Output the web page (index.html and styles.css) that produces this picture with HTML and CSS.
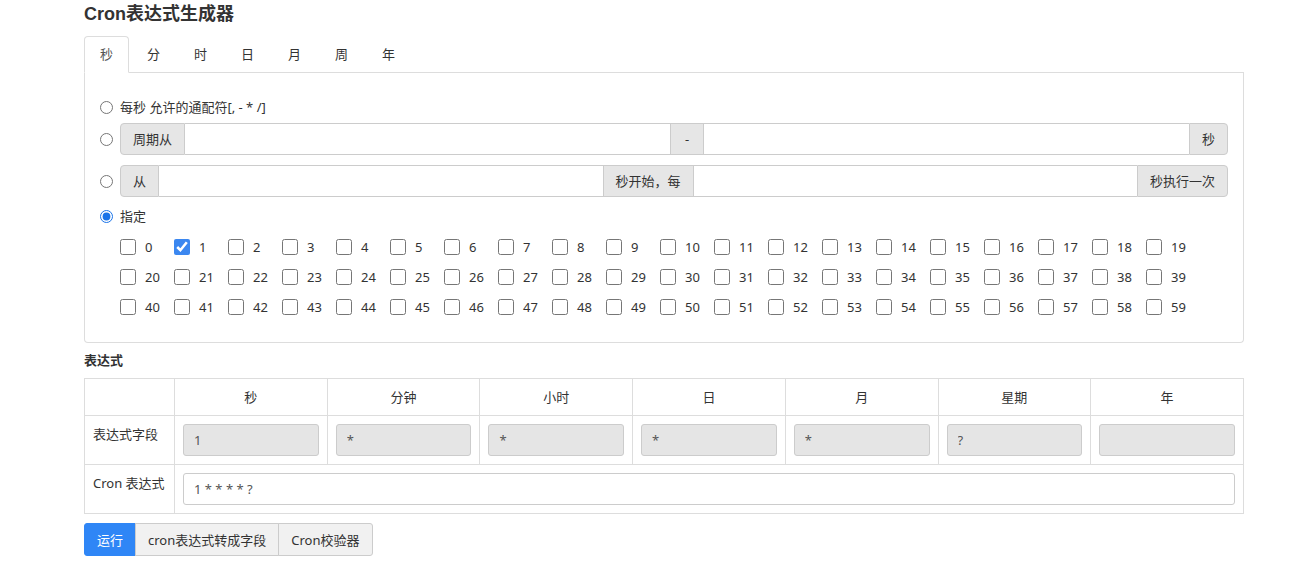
FILE: index.html
```html
<!DOCTYPE html>
<html lang="zh-CN">
<head>
<meta charset="utf-8">
<title>Cron表达式生成器</title>
<link rel="stylesheet" href="styles.css">
</head>
<body>
<div class="container">
  <h3 class="title">Cron表达式生成器</h3>
  <ul class="tabs">
    <li class="tab active">秒</li>
    <li class="tab">分</li>
    <li class="tab">时</li>
    <li class="tab">日</li>
    <li class="tab">月</li>
    <li class="tab">周</li>
    <li class="tab">年</li>
  </ul>
  <div class="panel">
    <div class="row row-1">
      <input type="radio" name="sec" class="radio">
      <span>每秒 允许的通配符[, - * /]</span>
    </div>
    <div class="row row-2">
      <input type="radio" name="sec" class="radio">
      <div class="input-group">
        <span class="addon">周期从</span>
        <input class="field" type="text">
        <span class="addon dash">-</span>
        <input class="field" type="text">
        <span class="addon">秒</span>
      </div>
    </div>
    <div class="row row-3">
      <input type="radio" name="sec" class="radio">
      <div class="input-group">
        <span class="addon">从</span>
        <input class="field" type="text">
        <span class="addon">秒开始，每</span>
        <input class="field" type="text">
        <span class="addon">秒执行一次</span>
      </div>
    </div>
    <div class="row row-4">
      <input type="radio" name="sec" class="radio" checked>
      <span>指定</span>
    </div>
    <div class="checks">
      <label class="check"><input type="checkbox"><span>0</span></label>
      <label class="check"><input type="checkbox" checked><span>1</span></label>
      <label class="check"><input type="checkbox"><span>2</span></label>
      <label class="check"><input type="checkbox"><span>3</span></label>
      <label class="check"><input type="checkbox"><span>4</span></label>
      <label class="check"><input type="checkbox"><span>5</span></label>
      <label class="check"><input type="checkbox"><span>6</span></label>
      <label class="check"><input type="checkbox"><span>7</span></label>
      <label class="check"><input type="checkbox"><span>8</span></label>
      <label class="check"><input type="checkbox"><span>9</span></label>
      <label class="check"><input type="checkbox"><span>10</span></label>
      <label class="check"><input type="checkbox"><span>11</span></label>
      <label class="check"><input type="checkbox"><span>12</span></label>
      <label class="check"><input type="checkbox"><span>13</span></label>
      <label class="check"><input type="checkbox"><span>14</span></label>
      <label class="check"><input type="checkbox"><span>15</span></label>
      <label class="check"><input type="checkbox"><span>16</span></label>
      <label class="check"><input type="checkbox"><span>17</span></label>
      <label class="check"><input type="checkbox"><span>18</span></label>
      <label class="check"><input type="checkbox"><span>19</span></label>
      <label class="check"><input type="checkbox"><span>20</span></label>
      <label class="check"><input type="checkbox"><span>21</span></label>
      <label class="check"><input type="checkbox"><span>22</span></label>
      <label class="check"><input type="checkbox"><span>23</span></label>
      <label class="check"><input type="checkbox"><span>24</span></label>
      <label class="check"><input type="checkbox"><span>25</span></label>
      <label class="check"><input type="checkbox"><span>26</span></label>
      <label class="check"><input type="checkbox"><span>27</span></label>
      <label class="check"><input type="checkbox"><span>28</span></label>
      <label class="check"><input type="checkbox"><span>29</span></label>
      <label class="check"><input type="checkbox"><span>30</span></label>
      <label class="check"><input type="checkbox"><span>31</span></label>
      <label class="check"><input type="checkbox"><span>32</span></label>
      <label class="check"><input type="checkbox"><span>33</span></label>
      <label class="check"><input type="checkbox"><span>34</span></label>
      <label class="check"><input type="checkbox"><span>35</span></label>
      <label class="check"><input type="checkbox"><span>36</span></label>
      <label class="check"><input type="checkbox"><span>37</span></label>
      <label class="check"><input type="checkbox"><span>38</span></label>
      <label class="check"><input type="checkbox"><span>39</span></label>
      <label class="check"><input type="checkbox"><span>40</span></label>
      <label class="check"><input type="checkbox"><span>41</span></label>
      <label class="check"><input type="checkbox"><span>42</span></label>
      <label class="check"><input type="checkbox"><span>43</span></label>
      <label class="check"><input type="checkbox"><span>44</span></label>
      <label class="check"><input type="checkbox"><span>45</span></label>
      <label class="check"><input type="checkbox"><span>46</span></label>
      <label class="check"><input type="checkbox"><span>47</span></label>
      <label class="check"><input type="checkbox"><span>48</span></label>
      <label class="check"><input type="checkbox"><span>49</span></label>
      <label class="check"><input type="checkbox"><span>50</span></label>
      <label class="check"><input type="checkbox"><span>51</span></label>
      <label class="check"><input type="checkbox"><span>52</span></label>
      <label class="check"><input type="checkbox"><span>53</span></label>
      <label class="check"><input type="checkbox"><span>54</span></label>
      <label class="check"><input type="checkbox"><span>55</span></label>
      <label class="check"><input type="checkbox"><span>56</span></label>
      <label class="check"><input type="checkbox"><span>57</span></label>
      <label class="check"><input type="checkbox"><span>58</span></label>
      <label class="check"><input type="checkbox"><span>59</span></label>
    </div>
  </div>

  <div class="section-label">表达式</div>
  <table class="expr">
    <colgroup>
      <col class="col-head">
      <col><col><col><col><col><col><col>
    </colgroup>
    <tr class="head-row">
      <td></td>
      <td>秒</td>
      <td>分钟</td>
      <td>小时</td>
      <td>日</td>
      <td>月</td>
      <td>星期</td>
      <td>年</td>
    </tr>
    <tr>
      <td class="row-label">表达式字段</td>
      <td><input class="ro" type="text" value="1" readonly></td>
      <td><input class="ro" type="text" value="*" readonly></td>
      <td><input class="ro" type="text" value="*" readonly></td>
      <td><input class="ro" type="text" value="*" readonly></td>
      <td><input class="ro" type="text" value="*" readonly></td>
      <td><input class="ro" type="text" value="?" readonly></td>
      <td><input class="ro" type="text" value="" readonly></td>
    </tr>
    <tr>
      <td class="row-label">Cron 表达式</td>
      <td colspan="7"><input class="cron" type="text" value="1 * * * * ?"></td>
    </tr>
  </table>

  <div class="btn-group">
    <button class="btn primary">运行</button>
    <button class="btn">cron表达式转成字段</button>
    <button class="btn">Cron校验器</button>
  </div>
</div>
</body>
</html>
```

FILE: styles.css
```css
* {
  box-sizing: border-box;
}

body {
  margin: 0;
  font-family: "Noto Sans", "Noto Sans CJK SC", sans-serif;
  font-size: 13px;
  line-height: 20px;
  color: #333;
  background: #fff;
}

.container {
  width: 1160px;
  margin-left: 84px;
}

.title {
  margin: 0;
  padding-top: 3px;
  height: 36px;
  font-family: "Liberation Sans", "Noto Sans CJK SC", sans-serif;
  font-size: 18px;
  font-weight: bold;
  line-height: 22px;
  color: #333;
}

.tabs {
  display: flex;
  list-style: none;
  margin: 0;
  padding: 0;
  height: 37px;
  border-bottom: 1px solid #ddd;
}

.tab {
  width: 45px;
  height: 37px;
  margin-right: 2px;
  text-align: center;
  line-height: 35px;
  color: #333;
  border: 1px solid transparent;
  border-radius: 4px 4px 0 0;
}

.tab.active {
  color: #555;
  background: #fff;
  border-color: #ddd;
  border-bottom-color: #fff;
}

.panel {
  border: 1px solid #ddd;
  border-top: none;
  border-radius: 0 0 4px 4px;
  padding: 24px 15px 20px 15px;
}

.row {
  display: flex;
  align-items: center;
}

.row-1 { height: 20px; margin-bottom: 6px; }
.row-2 { height: 32px; margin-bottom: 10px; }
.row-3 { height: 32px; margin-bottom: 9px; }
.row-4 { height: 20px; margin-bottom: 6px; }

.radio {
  width: 13px;
  height: 13px;
  margin: 0 7px 0 0;
  accent-color: #1a73e8;
  flex: none;
}

.input-group {
  display: flex;
  flex: 1;
  height: 32px;
}

.addon {
  flex: none;
  padding: 0 12px;
  line-height: 30px;
  background: #e6e6e6;
  border: 1px solid #ccc;
  color: #333;
}

.addon.dash {
  padding: 0 14px;
}

.addon:first-child {
  border-radius: 4px 0 0 4px;
}

.addon:last-child {
  border-radius: 0 4px 4px 0;
}

.field {
  flex: 1;
  min-width: 0;
  height: 32px;
  border: 1px solid #ccc;
  border-left: none;
  border-right: none;
  padding: 0 10px;
  font: inherit;
  background: #fff;
}

.checks {
  display: grid;
  grid-template-columns: repeat(20, 54px);
  grid-auto-rows: 30px;
  padding-left: 20px;
}

.check {
  display: flex;
  align-items: center;
}

.check input {
  width: 16px;
  height: 16px;
  margin: 0 9px 0 0;
  accent-color: #3b87f0;
}

.section-label {
  margin-top: 7px;
  height: 28px;
  font-weight: bold;
  line-height: 20px;
  color: #333;
}

.expr {
  width: 1160px;
  border-collapse: collapse;
  table-layout: fixed;
}

.col-head {
  width: 90px;
}

.expr td {
  border: 1px solid #ddd;
  padding: 8px;
  vertical-align: top;
}

.head-row td {
  text-align: center;
  height: 37px;
  padding: 8px;
}

.row-label {
  color: #333;
}

.ro,
.cron {
  display: block;
  width: 100%;
  height: 32px;
  padding: 0 10px;
  border: 1px solid #ccc;
  border-radius: 3px;
  font: inherit;
  color: #555;
}

.ro {
  background: #e5e5e5;
}

.cron {
  background: #fff;
}

.btn-group {
  display: flex;
  margin-top: 9px;
}

.btn {
  height: 33px;
  padding: 0 12px;
  font: inherit;
  color: #333;
  background: #f1f1f1;
  border: 1px solid #ccc;
  margin-left: -1px;
  border-radius: 0;
}

.btn:last-child {
  border-radius: 0 3px 3px 0;
}

.btn.primary {
  margin-left: 0;
  color: #fff;
  background: #2f86f6;
  border-color: #2f86f6;
  border-radius: 3px 0 0 3px;
}
```
